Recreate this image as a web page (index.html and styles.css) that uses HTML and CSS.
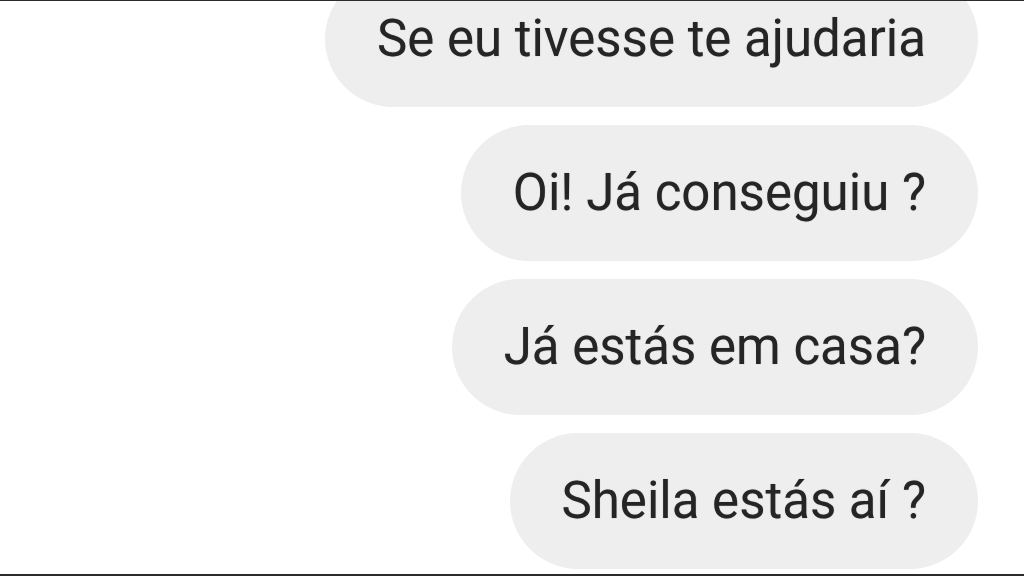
FILE: index.html
```html
<!DOCTYPE html>
<html lang="pt">
<head>
    <meta charset="UTF-8">
    <meta name="viewport" content="width=device-width, initial-scale=1.0">
    <title>Conversa</title>
    <link rel="stylesheet" href="styles.css">
</head>
<body>

<div class="chat">
    <div class="bubble">Se eu tivesse te ajudaria</div>
    <div class="bubble">Oi! Já conseguiu ?</div>
    <div class="bubble">Já estás em casa?</div>
    <div class="bubble">Sheila estás aí ?</div>
</div>

</body>
</html>
```

FILE: styles.css
```css
html, body {
    height: 100%;
}
body {
    margin: 0;
    background: #fff;
    font-family: 'Roboto', 'Liberation Sans', sans-serif;
    border-top: 1px solid #2b2b2b;
    border-bottom: 2px solid #2b2b2b;
    box-sizing: border-box;
    overflow: hidden;
}
.chat {
    display: flex;
    flex-direction: column;
    align-items: flex-end;
    gap: 18px;
    padding-right: 46px;
    margin-top: -30px;
}
.bubble {
    height: 136px;
    line-height: 136px;
    padding: 0 52px;
    border-radius: 68px;
    background: #eeeeee;
    color: #252525;
    font-size: 51px;
    white-space: nowrap;
    text-shadow: 0 0 1px rgba(0,0,0,0.35);
}
```
